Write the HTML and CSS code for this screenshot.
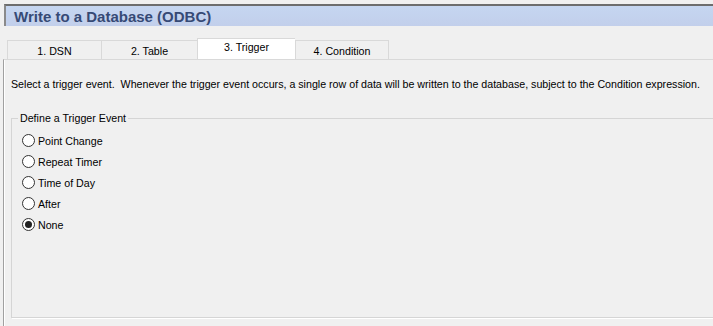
FILE: index.html
```html
<!DOCTYPE html>
<html>
<head>
<meta charset="utf-8">
<link rel="stylesheet" href="styles.css">
</head>
<body>
<div class="header"><span class="title">Write to a Database (ODBC)</span></div>
<div class="tabs">
  <div class="tab t1">1. DSN</div>
  <div class="tab t2">2. Table</div>
  <div class="tab t3 active">3. Trigger</div>
  <div class="tab t4">4. Condition</div>
</div>
<div class="panel">
  <p class="intro">Select a trigger event.&nbsp; Whenever the trigger event occurs, a single row of data will be written to the database, subject to the Condition expression.</p>
  <fieldset class="group">
    <legend>Define a Trigger Event</legend>
    <label class="radio"><span class="dot"></span>Point Change</label>
    <label class="radio"><span class="dot"></span>Repeat Timer</label>
    <label class="radio"><span class="dot"></span>Time of Day</label>
    <label class="radio"><span class="dot"></span>After</label>
    <label class="radio checked"><span class="dot"></span>None</label>
  </fieldset>
</div>
</body>
</html>
```
FILE: styles.css
```css
html, body { margin: 0; padding: 0; }
body {
  background: #f0f0f0;
  font-family: "Liberation Sans", Arial, sans-serif;
  font-size: 10.66px;
  color: #000;
  width: 713px;
  height: 326px;
  overflow: hidden;
  padding-top: 4px;
  box-sizing: border-box;
}
.header {
  margin-left: 4px;
  height: 20px;
  border-top: 2px solid #6d6d6d;
  border-left: 2px solid #8a8a8a;
  background: linear-gradient(#c5d6f1, #c2cfeb);
  display: flex;
  align-items: center;
  padding-left: 8px;
}
.title {
  font-weight: bold;
  font-size: 15px;
  color: #364a76;
}
.tabs {
  display: flex;
  align-items: flex-end;
  margin-top: 13px;
  margin-left: 7px;
  height: 20px;
}
.tab {
  height: 17px;
  border: 1px solid #d9d9d9;
  border-bottom: none;
  border-right: none;
  background: #f0f0f0;
  display: flex;
  align-items: center;
  justify-content: center;
  padding-top: 1px;
  box-sizing: content-box;
}
.t1 { width: 93px; }
.t2 { width: 95px; }
.t3 { width: 97px; }
.t4 { width: 92px; border-right: 1px solid #d9d9d9; }
.tab.active {
  background: #fff;
  align-items: flex-start;
  padding-top: 2px;
  height: 18px;
}
.panel {
  margin-left: 3px;
  border-top: 1px solid #d9d9d9;
  border-left: 1px solid #a0a0a0;
  box-shadow: inset 1px 0 0 #fff;
  height: 270px;
  padding-left: 7px;
}
.intro {
  margin: 17px 0 0 0;
  line-height: 14px;
  white-space: nowrap;
}
.group {
  margin: 20px 0 0 0;
  padding: 5px 0 0 10px;
  border: none;
  border-top: 1px solid #d5d5d5;
  border-left: 1px solid #d5d5d5;
  border-bottom: 1px solid #d5d5d5;
  box-shadow: 1px 1px 0 #fff;
  height: 207px;
  box-sizing: border-box;
}
.group legend {
  padding: 0 2px;
  margin-left: -4px;
  line-height: 14px;
}
.radio {
  display: flex;
  align-items: center;
  height: 21px;
}
.dot {
  width: 11px;
  height: 11px;
  border: 1px solid #333;
  border-radius: 50%;
  background: #fff;
  margin-right: 3px;
  position: relative;
  flex: none;
}
.checked .dot::after {
  content: "";
  position: absolute;
  left: 2px; top: 2px;
  width: 7px; height: 7px;
  border-radius: 50%;
  background: #222;
}
```
